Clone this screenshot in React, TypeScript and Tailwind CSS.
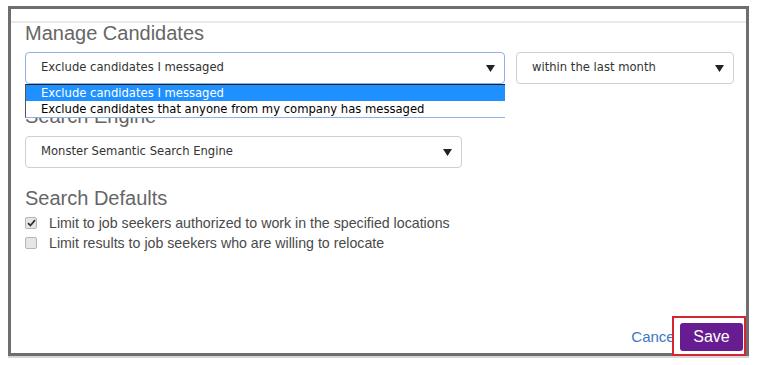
import { useState } from 'react';

const selectText = 'font-["DejaVu_Sans",Verdana,sans-serif] text-[11.6px] text-[#333]';

const Caret = () => (
  <svg width="9" height="7" viewBox="0 0 9 7" className="shrink-0">
    <path d="M0 0 H9 L4.5 7 Z" fill="#222" />
  </svg>
);

const FakeSelect = ({ value, width, focused }: { value: string; width: string; focused?: boolean }) => (
  <div
    className={`${width} h-[32px] flex items-center justify-between pl-[15px] pr-[9px] rounded-[4px] border bg-white ${
      focused ? 'border-[#8fb0e6]' : 'border-[#cfcfcf]'
    } ${selectText}`}
  >
    <span>{value}</span>
    <Caret />
  </div>
);

const Check = ({ checked }: { checked?: boolean }) => (
  <div className="w-[12px] h-[12px] rounded-[2px] border border-[#b5b5b5] bg-[#e6e6e6] flex items-center justify-center shrink-0">
    {checked && (
      <svg width="9" height="8" viewBox="0 0 9 8">
        <path d="M1 4.2 L3.4 6.5 L8 1.2" fill="none" stroke="#333" strokeWidth="1.8" />
      </svg>
    )}
  </div>
);

export default function App() {
  const [authorized, setAuthorized] = useState(true);
  const [relocate, setRelocate] = useState(false);

  return (
    <div className="w-[758px] h-[365px] bg-white pt-[6px] pl-[8px] font-['Liberation_Sans',Arial,sans-serif]">
      <div className="w-[741px] h-[350px] border-[3px] border-[#6e6e6e] shadow-[0_2px_0_#d6d6d6] flex flex-col">
        <div className="h-[14px] shrink-0 border-b-[2px] border-[#e9e9e9] bg-white" />

        <div className="flex-1 flex flex-col pl-[14px] pr-[12px]">
          <h2 className="text-[20px] leading-[20px] text-[#666] mt-0">Manage Candidates</h2>

          <div className="relative flex gap-[11px] mt-[9px]">
            <FakeSelect value="Exclude candidates I messaged" width="w-[480px]" focused />
            <FakeSelect value="within the last month" width="w-[218px]" />

            {/* open option list */}
            <div
              className={`absolute left-0 top-[32px] w-[480px] z-10 bg-white border-t border-l border-t-[#222] border-l-[#555] border-b border-b-[#8fb0e6] ${selectText}`}
            >
              <div className="h-[16px] leading-[16px] pl-[15px] bg-[#1e90ff] text-white">
                Exclude candidates I messaged
              </div>
              <div className="h-[16px] leading-[16px] pl-[15px] text-black">
                Exclude candidates that anyone from my company has messaged
              </div>
            </div>
          </div>

          <h2 className="text-[20px] leading-[20px] text-[#666] mt-[22px]">Search Engine</h2>

          <div className="mt-[10px]">
            <FakeSelect value="Monster Semantic Search Engine" width="w-[437px]" />
          </div>

          <h2 className="text-[20px] leading-[20px] text-[#666] mt-[20px]">Search Defaults</h2>

          <div className="flex flex-col gap-[8px] mt-[9px] text-[14.2px] leading-[12px] text-[#4a4a4a]">
            <label className="flex items-center gap-[12px]" onClick={() => setAuthorized(!authorized)}>
              <Check checked={authorized} />
              <span>Limit to job seekers authorized to work in the specified locations</span>
            </label>
            <label className="flex items-center gap-[12px]" onClick={() => setRelocate(!relocate)}>
              <Check checked={relocate} />
              <span>Limit results to job seekers who are willing to relocate</span>
            </label>
          </div>

          <div className="mt-auto mb-[-3px] flex items-center justify-end">
            <a className="text-[15px] text-[#3b78c4] mr-[-6px] mt-[3px]">Cancel</a>
            <div className="relative z-10 border-2 border-[#d42530] bg-white pt-[5px] pb-[3px] pl-[6px] pr-[1px] mr-[-12px]">
              <button className="w-[63px] h-[28px] rounded-[3px] bg-[#681c92] text-white text-[16px]">Save</button>
            </div>
          </div>
        </div>
      </div>
    </div>
  );
}
